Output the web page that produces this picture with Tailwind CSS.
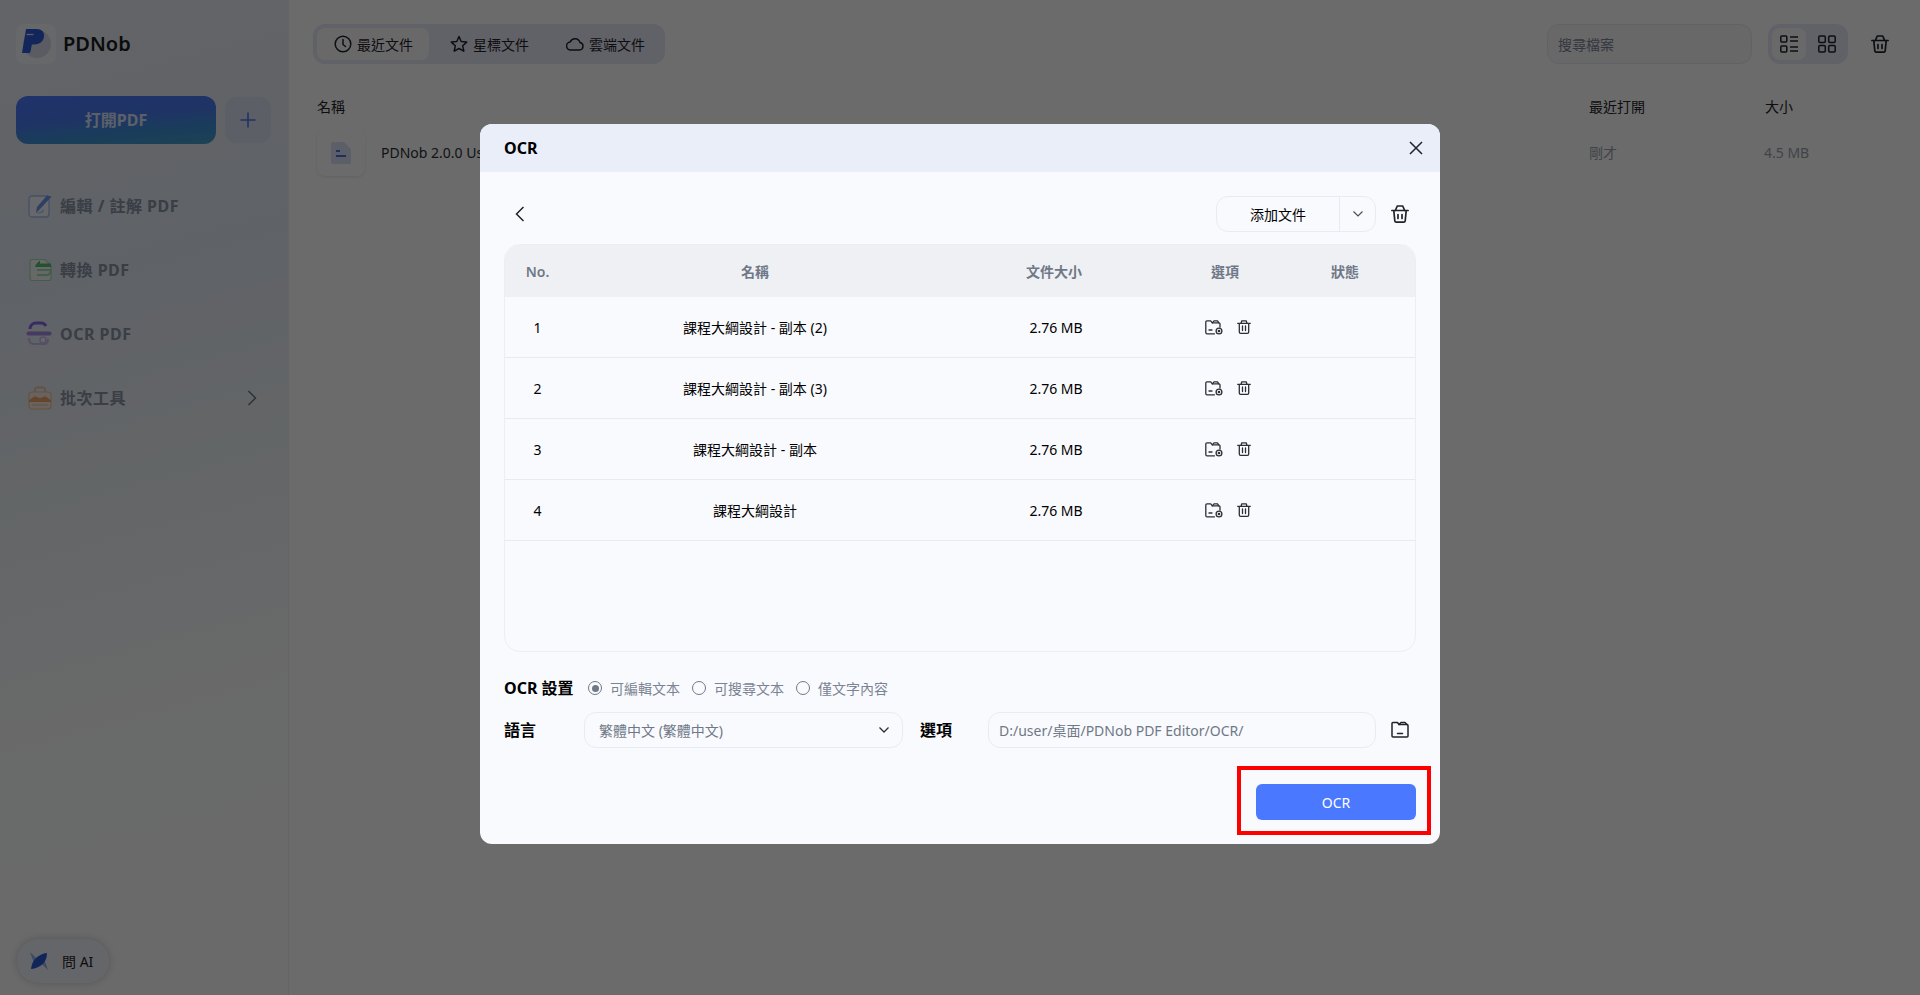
<!DOCTYPE html>
<html lang="zh-Hant">
<head>
<meta charset="UTF-8" />
<title>PDNob</title>
<script src="https://cdn.jsdelivr.net/npm/@tailwindcss/browser@4"></script>
</head>
<body class="overflow-hidden">
<svg class="hidden">
  <symbol id="basket" viewBox="0 0 18 18" fill="none" stroke="currentColor" stroke-width="1.700" stroke-linejoin="round" stroke-linecap="round">
    <path d="M.9 5.500h16.200M4.300 5.500 6.300 1h5.400l2 4.500M2.800 5.500l1 10.300a1.500 1.500 0 0 0 1.500 1.300h7.400a1.500 1.500 0 0 0 1.500-1.300l1-10.300M7 9.500v4M11 9.500v4" />
  </symbol>
  <symbol id="rowbin" viewBox="0 0 14 14" fill="none" stroke="currentColor" stroke-width="1.300" stroke-linejoin="round" stroke-linecap="round">
    <path d="M.7 3.300h12.600M4 3.300 4.800.8h4.400L10 3.300M2.300 3.300v8.700a1.300 1.300 0 0 0 1.300 1.300h6.800a1.300 1.300 0 0 0 1.300-1.300V3.300M5.500 6v4.500M8.500 6v4.500" />
  </symbol>
  <symbol id="rowfolder" viewBox="0 0 18 15" fill="none" stroke="currentColor" stroke-width="1.300" stroke-linecap="round" stroke-linejoin="round">
    <path d="M9.500 13.800H2a1.200 1.200 0 0 1-1.200-1.200V2A1.200 1.200 0 0 1 2 .8h3.700l1.600 2h6.500A1.200 1.200 0 0 1 15 4v3" />
    <path d="M7.300 2.800 9 .8h3.500l1.300 2" />
    <path d="M4 10h3" />
    <circle cx="14" cy="11" r="2.900" />
    <circle cx="14" cy="11" r=".7" fill="currentColor" />
  </symbol>
</svg>

<div class="relative h-[995px] w-[1920px] flex bg-white font-['Noto_Sans','Noto_Sans_CJK_TC',sans-serif] text-[#1f2329]">

  <!-- sidebar -->
  <aside class="w-[289px] shrink-0 h-full flex flex-col border-r border-[#f0f0f3] bg-[linear-gradient(165deg,#eceff6_0%,#e3eaf5_28%,#eef3f6_50%,#fbfcfd_72%,#fdfdfe_100%)] px-4">
    <div class="h-10 mt-6 flex items-center gap-[7px]">
      <div class="w-10 h-10 rounded-lg bg-white/50">
        <svg width="40" height="40" viewBox="0 0 40 40">
          <circle cx="21" cy="20" r="14" fill="#d6daec" />
          <path d="M10 5h10.500c5 0 8.300 3 7.500 7.800-.8 5-4.800 7.700-9.600 7.700h-2.500l-1.400 7c-.2 1-1 1.500-2 1.500H6z" fill="#2d5cdc" />
          <path d="M10.500 10.500h7" stroke="#d6daec" stroke-width="1.300" />
        </svg>
      </div>
      <span class="text-[20px] font-semibold text-[#1a1d22]">PDNob</span>
    </div>

    <div class="mt-8 flex items-center gap-[9px]">
      <button class="w-[200px] h-12 rounded-xl bg-[linear-gradient(175deg,#4f78ff_0%,#4a7df0_45%,#3d93d6_75%,#46a0c8_100%)] text-white/80 text-[16px] font-bold">打開PDF</button>
      <button class="w-[46px] h-[46px] rounded-xl bg-[#dde3f5] flex items-center justify-center">
        <svg width="18" height="18" viewBox="0 0 18 18" stroke="#4d78ef" stroke-width="1.600"><path d="M9 1.500v15M1.500 9h15" /></svg>
      </button>
    </div>

    <nav class="mt-[30px] flex flex-col text-[16px] font-bold text-[#8a93a5] tracking-[.5px]">
      <a class="h-16 flex items-center gap-2 pl-3">
        <svg width="24" height="24" viewBox="0 0 24 24" fill="none">
          <rect x="1" y="2" width="20" height="21" rx="3" stroke="#a9bdf2" stroke-width="1.300" fill="#f4f7ff" />
          <path d="M23.500 2.500 14 13l-6 6 1-6L19 1.500z" fill="#6f93ee" />
          <path d="M8 19c2-.5 5-1 8-4v3c-3 2-6 2-8 1z" fill="#c5d3f7" />
        </svg>
        <span>編輯 / 註解 PDF</span>
      </a>
      <a class="h-16 flex items-center gap-2 pl-3">
        <svg width="24" height="24" viewBox="0 0 24 24" fill="none">
          <path d="M2 3.500A2 2 0 0 1 4 1.500h13l6 6v13a2 2 0 0 1-2 2H4a2 2 0 0 1-2-2z" stroke="#a8dbb4" stroke-width="1.200" fill="#f3fbf5" />
          <path d="M7 9.500c0-3 2.500-5 5-7v3h11v3.500H7z" fill="#58c070" />
          <path d="M9 12h14c0 3-1 4-3 5H9" stroke="#a8dbb4" stroke-width="2" />
        </svg>
        <span>轉換 PDF</span>
      </a>
      <a class="h-16 flex items-center gap-2 pl-[10px]">
        <svg width="26" height="26" viewBox="0 0 26 26" fill="none">
          <path d="M4 8c0-4 3-6 6-6h5c3 0 4 1 5 3" stroke="#8c63e8" stroke-width="3" />
          <rect x="0.500" y="10.500" width="25" height="4" rx="2" fill="#a98be6" />
          <path d="M3 17c0 4 2 6 5 6h10c3 0 4-2 4-5" stroke="#cbbcf0" stroke-width="2" />
          <circle cx="17" cy="19" r="3" stroke="#cbbcf0" stroke-width="1.500" fill="#f5f2fd" />
        </svg>
        <span>OCR PDF</span>
      </a>
      <a class="h-16 flex items-center gap-2 pl-3">
        <svg width="24" height="24" viewBox="0 0 24 24" fill="none">
          <path d="M7 6V3.500A2 2 0 0 1 9 1.500h6a2 2 0 0 1 2 2V6" stroke="#eec3a4" stroke-width="1.800" />
          <rect x="1" y="6" width="22" height="17" rx="3" fill="#fbeadd" stroke="#eec3a4" stroke-width="1.200" />
          <path d="M1 14c3-1 4-3.500 6-3.500s3 1.500 5 1.500 3-1.500 5-1.500 3 2.500 6 3.500v2H1z" fill="#f0a56f" />
          <path d="M4 19h16" stroke="#eec3a4" stroke-width="1.200" />
        </svg>
        <span>批次工具</span>
        <svg class="ml-auto mr-[14px]" width="12" height="18" viewBox="0 0 12 18" fill="none" stroke="#6d7482" stroke-width="1.500"><path d="M2.500 2 9.500 9l-7 7" /></svg>
      </a>
    </nav>

    <div class="mt-auto mb-3 w-[92px] h-11 rounded-full bg-[#f1f3f9] shadow-[0_0_8px_rgba(0,0,0,.2)] flex items-center gap-[14px] pl-[13px] text-[14px] text-[#1f2329] ml-px">
      <svg width="18" height="18" viewBox="0 0 18 18">
        <path d="M0 0 6 6 4 11z" fill="#8bb1f0" /><path d="M18 18 12 12l2-5z" fill="#8bb1f0" />
        <path d="M1 17C2 8 8 2 17 1c0 9-6 15-16 16z" fill="#2c59d4" />
      </svg>
      <span>問 AI</span>
    </div>
  </aside>

  <!-- file list -->
  <main class="flex-1 pt-6 pl-6 pr-4 text-[14px]">
    <div class="flex items-center h-10">
      <div class="ml-0 w-[352px] h-10 rounded-xl bg-[#e7e9f5] p-1 flex items-center">
        <div class="w-[112px] h-8 rounded-lg bg-[#fbfbfd] flex items-center pl-[17px] gap-[5px]">
          <svg width="18" height="18" viewBox="0 0 18 18" fill="none" stroke="currentColor" stroke-width="1.500" stroke-linecap="round" stroke-linejoin="round"><circle cx="9" cy="9" r="7.800" /><path d="M9 4.500V9.500l2.500 2" /></svg>
          <span>最近文件</span>
        </div>
        <div class="w-[116px] h-8 flex items-center pl-[21px] gap-[5px]">
          <svg width="18" height="18" viewBox="0 0 18 18" fill="none" stroke="currentColor" stroke-width="1.500" stroke-linejoin="round"><path d="M9 1.500 11.200 6.500l5.500.6-4 3.700 1.100 5.400L9 13.500l-4.800 2.700 1.100-5.400-4-3.700 5.500-.6z" /></svg>
          <span>星標文件</span>
        </div>
        <div class="w-[116px] h-8 flex items-center pl-[21px] gap-[5px]">
          <svg width="18" height="18" viewBox="0 0 18 18" fill="none" stroke="currentColor" stroke-width="1.500" stroke-linejoin="round"><path d="M5 15h8.500a3.800 3.800 0 0 0 .5-7.500A5.200 5.200 0 0 0 4.200 7 4 4 0 0 0 5 15z" /></svg>
          <span>雲端文件</span>
        </div>
      </div>

      <div class="ml-auto w-[205px] h-10 rounded-xl border border-[#e8e9f2] bg-[#f8f8fb] flex items-center pl-[10px] text-[#7d8698]">搜尋檔案</div>
      <div class="ml-4 w-20 h-10 rounded-xl bg-[#e7e9f5] p-1 flex items-center">
        <div class="w-[34px] h-8 rounded-lg bg-[#fbfbfd] flex items-center justify-center">
          <svg width="18" height="18" viewBox="0 0 18 18" fill="none" stroke="currentColor" stroke-width="1.500"><rect x=".800" y="1" width="6" height="6" rx="1" /><rect x=".800" y="11" width="6" height="6" rx="1" /><path d="M10 2h8M10 6h8M10 12h8M10 16h8" /></svg>
        </div>
        <div class="w-[38px] h-8 flex items-center justify-center pl-1">
          <svg width="18" height="18" viewBox="0 0 18 18" fill="none" stroke="currentColor" stroke-width="1.500"><rect x=".800" y="1" width="6.500" height="6.500" rx="1.200" /><rect x="10.700" y="1" width="6.500" height="6.500" rx="1.200" /><rect x=".800" y="10.500" width="6.500" height="6.500" rx="1.200" /><rect x="10.700" y="10.500" width="6.500" height="6.500" rx="1.200" /></svg>
        </div>
      </div>
      <svg class="ml-[23px] mr-[15px]" width="18" height="18"><use href="#basket" /></svg>
    </div>

    <div class="mt-8 flex items-center h-5">
      <span class="w-[1276px] pl-1">名稱</span>
      <span class="w-[176px]">最近打開</span>
      <span>大小</span>
    </div>
    <div class="mt-[14px] flex items-center h-[46px] pl-1">
      <div class="w-12 h-[46px] rounded-lg bg-white shadow-[0_1px_3px_rgba(0,0,0,.1)] flex items-center justify-center">
        <svg width="20" height="22" viewBox="0 0 20 22"><path d="M2 0h11l7 7v13a2 2 0 0 1-2 2H2a2 2 0 0 1-2-2V2a2 2 0 0 1 2-2z" fill="#dde3f7" /><path d="M5 9h4M5 14h10" stroke="#4a72e0" stroke-width="2" /></svg>
      </div>
      <span class="ml-4 w-[1208px] pb-0.5 text-[#2b2f36]">PDNob 2.0.0 User</span>
      <span class="w-[175px] pb-0.5 text-[#9aa1ad]">剛才</span>
      <span class="pb-0.5 text-[#9aa1ad]">4.5 MB</span>
    </div>
  </main>

  <!-- dim layer and dialog -->
  <div class="absolute inset-0 bg-black/[.58] flex justify-center items-start pt-[124px]">
    <div class="w-[960px] h-[720px] rounded-xl bg-[#f9fafd] overflow-visible flex flex-col text-[14px]">
      <div class="h-12 shrink-0 rounded-t-xl bg-[#e9eef9] flex items-center justify-between pl-6 pr-[15px]">
        <span class="text-[16px] font-bold text-black">OCR</span>
        <svg width="18" height="18" viewBox="0 0 18 18" fill="none" stroke="#1f2329" stroke-width="1.500"><path d="M3 3l12 12M15 3 3 15" /></svg>
      </div>

      <div class="flex-1 px-6 pt-6 flex flex-col">
        <div class="h-9 flex items-center">
          <svg class="ml-[10px]" width="12" height="18" viewBox="0 0 12 18" fill="none" stroke="#1f2329" stroke-width="1.500"><path d="M9.500 2 2.500 9l7 7" /></svg>
          <div class="ml-auto w-[160px] h-9 rounded-xl border border-[#e9ebf3] flex items-center">
            <span class="w-[122px] text-center text-black">添加文件</span>
            <span class="w-9 h-full border-l border-[#e9ebf3] flex items-center justify-center">
              <svg width="12" height="8" viewBox="0 0 12 8" fill="none" stroke="#4a4f57" stroke-width="1.200"><path d="M1.500 1.500 6 6l4.500-4.500" /></svg>
            </span>
          </div>
          <svg class="ml-[15px] mr-[7px] text-[#1f2329]" width="18" height="18"><use href="#basket" /></svg>
        </div>

        <div class="mt-3 h-[408px] rounded-2xl border border-[#eceef4] overflow-hidden">
          <div class="h-[52px] bg-[#eff0f4] grid grid-cols-[65px_370px_228px_114px_126px] items-center text-center font-semibold text-[#6f7887]">
            <span>No.</span><span>名稱</span><span>文件大小</span><span>選項</span><span>狀態</span>
          </div>
          <div class="h-[61px] border-b border-[#e8eaf1] grid grid-cols-[65px_370px_228px_114px_126px] items-center text-center text-black">
            <span>1</span><span>課程大綱設計 - 副本 (2)</span><span class="pl-1">2.76 MB</span>
            <span class="flex items-center justify-center gap-[14px] pl-[6px] text-[#2b2f36]"><svg width="18" height="15"><use href="#rowfolder" /></svg><svg width="14" height="14"><use href="#rowbin" /></svg></span>
          </div>
          <div class="h-[61px] border-b border-[#e8eaf1] grid grid-cols-[65px_370px_228px_114px_126px] items-center text-center text-black">
            <span>2</span><span>課程大綱設計 - 副本 (3)</span><span class="pl-1">2.76 MB</span>
            <span class="flex items-center justify-center gap-[14px] pl-[6px] text-[#2b2f36]"><svg width="18" height="15"><use href="#rowfolder" /></svg><svg width="14" height="14"><use href="#rowbin" /></svg></span>
          </div>
          <div class="h-[61px] border-b border-[#e8eaf1] grid grid-cols-[65px_370px_228px_114px_126px] items-center text-center text-black">
            <span>3</span><span>課程大綱設計 - 副本</span><span class="pl-1">2.76 MB</span>
            <span class="flex items-center justify-center gap-[14px] pl-[6px] text-[#2b2f36]"><svg width="18" height="15"><use href="#rowfolder" /></svg><svg width="14" height="14"><use href="#rowbin" /></svg></span>
          </div>
          <div class="h-[61px] border-b border-[#e8eaf1] grid grid-cols-[65px_370px_228px_114px_126px] items-center text-center text-black">
            <span>4</span><span>課程大綱設計</span><span class="pl-1">2.76 MB</span>
            <span class="flex items-center justify-center gap-[14px] pl-[6px] text-[#2b2f36]"><svg width="18" height="15"><use href="#rowfolder" /></svg><svg width="14" height="14"><use href="#rowbin" /></svg></span>
          </div>
        </div>

        <div class="mt-6 h-6 flex items-center text-[#7b8494]">
          <span class="w-[84px] text-[16px] font-bold text-black">OCR 設置</span>
          <label class="w-[104px] flex items-center gap-2">
            <span class="w-[14px] h-[14px] rounded-full border-[1.5px] border-[#6f7887] flex items-center justify-center"><span class="w-[7px] h-[7px] rounded-full bg-[#6f7887]"></span></span>
            <span>可編輯文本</span>
          </label>
          <label class="w-[104px] flex items-center gap-2">
            <span class="w-[14px] h-[14px] rounded-full border-[1.5px] border-[#6f7887]"></span>
            <span>可搜尋文本</span>
          </label>
          <label class="w-[104px] flex items-center gap-2">
            <span class="w-[14px] h-[14px] rounded-full border-[1.5px] border-[#6f7887]"></span>
            <span>僅文字內容</span>
          </label>
        </div>

        <div class="mt-3 h-9 flex items-center">
          <span class="w-20 text-[16px] font-bold text-black">語言</span>
          <div class="w-[319px] h-9 rounded-xl border border-[#e9ebf3] flex items-center justify-between pl-[14px] pr-3 text-[#6f7887]">
            <span>繁體中文 (繁體中文)</span>
            <svg width="12" height="8" viewBox="0 0 12 8" fill="none" stroke="#2b2f36" stroke-width="1.300"><path d="M1.500 1.500 6 6l4.500-4.500" /></svg>
          </div>
          <span class="ml-[17px] w-[68px] text-[16px] font-bold text-black">選項</span>
          <div class="w-[388px] h-9 rounded-xl border border-[#e9ebf3] flex items-center pl-[10px] text-[#6f7887]">D:/user/桌面/PDNob PDF Editor/OCR/</div>
          <svg class="ml-[15px]" width="18" height="18" viewBox="0 0 18 18" fill="none" stroke="#1f2329" stroke-width="1.500" stroke-linejoin="round" stroke-linecap="round"><path d="M1 2.500a1 1 0 0 1 1-1h4.500l1.500 2h8a1 1 0 0 1 1 1V15a1 1 0 0 1-1 1H2a1 1 0 0 1-1-1z" /><path d="M8 3.500 10 1.500h4l2 2" /><path d="M6.500 12.500h5" /></svg>
        </div>

        <div class="mt-9 flex justify-end">
          <div class="relative">
            <button class="w-[160px] h-9 rounded-md bg-[#4a78ff] text-white text-[14px]">OCR</button>
            <div class="absolute -left-[19px] -right-[15px] -top-[18px] -bottom-[15px] border-4 border-[#ff0000]"></div>
          </div>
        </div>
      </div>
    </div>
  </div>
</div>
</body>
</html>
